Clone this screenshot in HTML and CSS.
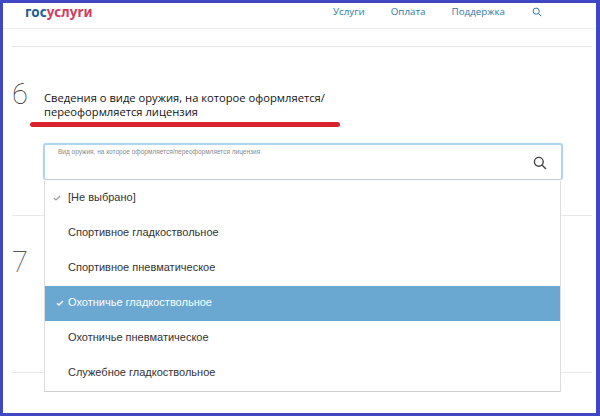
FILE: index.html
```html
<!DOCTYPE html>
<html lang="ru">
<head>
<meta charset="utf-8">
<title>Госуслуги</title>
<link rel="stylesheet" href="styles.css">
</head>
<body>
<div class="frame">
  <header class="topbar">
    <div class="logo"><span class="logo-gos">гос</span><span class="logo-usl">услуrи</span></div>
    <nav class="nav">
      <a class="nav-link">Услуги</a>
      <a class="nav-link">Оплата</a>
      <a class="nav-link">Поддержка</a>
      <svg class="nav-search" viewBox="0 0 12 12" aria-hidden="true"><circle cx="5" cy="5" r="3.7"/><path d="M7.7 7.7 11 11"/></svg>
    </nav>
  </header>
  <main class="content">
    <section class="step step-six">
      <div class="step-head">
        <div class="step-num">6</div>
        <h2 class="step-title">Сведения о виде оружия, на которое оформляется/<br>переоформляется лицензия</h2>
      </div>
      <div class="field">
        <div class="field-label">Вид оружия, на которое оформляется/переоформляется лицензия</div>
        <svg class="field-search" viewBox="0 0 14 14" aria-hidden="true"><circle cx="5.8" cy="5.8" r="4.4"/><path d="M9 9 13 13"/></svg>
      </div>
    </section>
    <section class="step step-seven">
      <div class="step-num">7</div>
    </section>
    <div class="mark"></div>
    <ul class="dropdown">
      <li class="option is-default"><svg class="check" viewBox="0 0 10 8" aria-hidden="true"><path d="M1 4.2 3.6 6.6 9 1.4"/></svg>[Не выбрано]</li>
      <li class="option">Спортивное гладкоствольное</li>
      <li class="option">Спортивное пневматическое</li>
      <li class="option is-active"><svg class="check" viewBox="0 0 10 8" aria-hidden="true"><path d="M1 4.2 3.6 6.6 9 1.4"/></svg>Охотничье гладкоствольное</li>
      <li class="option">Охотничье пневматическое</li>
      <li class="option">Служебное гладкоствольное</li>
    </ul>
  </main>
</div>
</body>
</html>
```
FILE: styles.css
```css
* { box-sizing: border-box; }
html, body { margin: 0; padding: 0; }
body { width: 600px; height: 416px; overflow: hidden; background: #fff; font-family: "Liberation Sans", Arial, sans-serif; }
.frame { width: 600px; height: 416px; border: solid #3f47c2; border-width: 3px 4px 3px 3px; background: #fff; display: flex; flex-direction: column; }
.topbar { height: 26px; flex: none; display: flex; justify-content: space-between; align-items: flex-start; border-bottom: 1px solid #f0f0f0; padding-left: 22px; }
.logo { font-family: "Noto Sans", sans-serif; font-weight: 700; font-size: 13.4px; line-height: 18px; letter-spacing: .1px; }
.logo-gos { color: #1d5f92; }
.logo-usl { color: #d33a5e; }
.nav { display: flex; align-items: center; height: 17px; padding-right: 54px; }
.nav-link { font-family: "Open Sans", sans-serif; font-size: 9.8px; color: #2f7aa8; margin-right: 26px; }
.nav-link:nth-child(3) { margin-right: 27px; }
.nav-search { width: 10px; height: 10px; fill: none; stroke: #2f7aa8; stroke-width: 1.2; }
.content { flex: 1; position: relative; padding: 0 4px 0 9px; display: flex; flex-direction: column; }
.step { border-top: 1px solid #e4e4e4; }
.step-six { margin-top: 17px; height: 169px; padding-top: 32px; }
.step-head { display: flex; align-items: flex-start; }
.step-num { font-family: "Roboto", sans-serif; font-weight: 100; font-size: 29px; line-height: 30px; color: #333; width: 32px; flex: none; }
.step-title { margin: 12px 0 0; font-family: "Open Sans", sans-serif; font-weight: 500; font-size: 11.2px; line-height: 13.5px; color: #141414; }
.field { position: relative; margin: 25px 0 0 31px; width: 520px; height: 37px; border: 2px solid #b0d6ef; border-bottom: 1px solid #c4ccd2; border-radius: 3px; padding: 2px 0 0 13px; box-shadow: 0 0 1px #b0d6ef; }
.field-label { font-size: 6.5px; line-height: 9px; color: #8a8a8a; }
.field-search { position: absolute; right: 14px; top: 11px; width: 14px; height: 14px; fill: none; stroke: #444; stroke-width: 1.4; }
.step-seven { height: 158px; padding-top: 31px; border-color: #e8e8e8; border-bottom: 1px solid #e8e8e8; }
.mark { position: absolute; left: 27px; top: 93px; width: 310px; height: 5px; border-radius: 3px; background: #d8232f; }
.dropdown { position: absolute; left: 41px; top: 152px; width: 517px; margin: 0; padding: 0; list-style: none; background: #fff; border: 1px solid #dcdcdc; border-top: 0; border-bottom: 1px solid #cfcfcf; display: flex; flex-direction: column; }
.option { height: 35px; flex: none; display: flex; align-items: center; padding: 0 0 3px 23px; position: relative; font-size: 11px; color: #333; }
.is-active { background: #6aa8d2; color: #fff; }
.check { position: absolute; left: 8px; top: 50%; margin-top: -4px; width: 8px; height: 6px; fill: none; stroke: #999; stroke-width: 1.6; }
.is-active .check { left: 11px; stroke: #fff; stroke-width: 1.9; }
```
